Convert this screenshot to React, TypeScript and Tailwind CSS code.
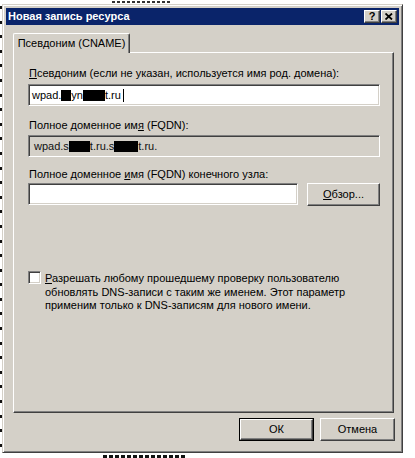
import React from "react";

const sunken =
  "border border-t-[#808080] border-l-[#808080] border-r-white border-b-white shadow-[inset_1px_1px_#404040,inset_-1px_-1px_#d4d0c8]";
const raised =
  "border border-t-white border-l-white border-r-[#404040] border-b-[#404040] shadow-[inset_-1px_-1px_#808080]";

function Blob({ w }: { w: string }) {
  return <span className={`inline-block h-[11px] bg-black align-[-1px] ${w}`} />;
}

export default function App() {
  const marks = Array.from({ length: 32 }, (_, i) => i);
  const topDots = Array.from({ length: 12 }, (_, i) => i);
  const botDots = Array.from({ length: 14 }, (_, i) => i);
  return (
    <div className="relative w-[415px] h-[458px] overflow-hidden bg-white text-[11px] leading-[13px] text-black font-['Liberation_Sans',Arial,sans-serif]">
      {/* background fragments behind the dialog */}
      <div className="absolute left-0 top-[6px] flex flex-col">
        {marks.map((i) => (
          <div key={i} className="h-[14.6px]">
            <div className="w-[3px] h-[3px] bg-[#111]" />
          </div>
        ))}
      </div>
      <div className="absolute left-[112px] top-[1px] flex gap-[2px]">
        {topDots.map((i) => (
          <div key={i} className="w-[3px] h-[2px] bg-[#333]" />
        ))}
      </div>
      <div className="absolute left-[103px] top-[455px] flex gap-[2px]">
        {botDots.map((i) => (
          <div key={i} className="w-[4px] h-[3px] bg-[#111]" />
        ))}
      </div>

      {/* dialog window */}
      <div className="absolute left-[2px] top-[4px] w-[401px] h-[449px] bg-[#d4d0c8] border border-t-[#d4d0c8] border-l-[#d4d0c8] border-r-[#404040] border-b-[#404040] shadow-[inset_1px_1px_#fff,inset_-1px_-1px_#808080] p-[3px] flex flex-col">
        {/* title bar */}
        <div className="h-[17px] bg-[#0a246a] flex items-center pl-[2px] pr-[2px]">
          <span className="text-white font-bold text-[11px] flex-1">Новая запись ресурса</span>
          <div className="flex gap-[1px]">
            <div className={`w-[16px] h-[13px] bg-[#d4d0c8] ${raised} flex items-center justify-center font-bold text-[11px] leading-none`}>
              ?
            </div>
            <div className={`w-[16px] h-[13px] bg-[#d4d0c8] ${raised} flex items-center justify-center`}>
              <svg width="8" height="7" viewBox="0 0 8 7">
                <path d="M0.5 0.5 L7 6.5 M7 0.5 L0.5 6.5" stroke="#000" strokeWidth="1.8" />
              </svg>
            </div>
          </div>
        </div>

        {/* tabs */}
        <div className="mt-[8px] ml-[7px] mr-[5px] flex flex-col">
          <div className="flex">
            <div className="relative z-10 w-[117px] h-[20px] mb-[-1px] bg-[#d4d0c8] border-t border-l border-r border-t-white border-l-white border-r-[#404040] shadow-[inset_-1px_0_#808080] rounded-t-[2px] flex items-center justify-center">
              Псевдоним (CNAME)
            </div>
          </div>
          <div className={`h-[361px] ${raised} pt-[14px] pl-[14px] pr-[13px] flex flex-col`}>
            <div className="pl-[1px]">
              <span className="underline underline-offset-[1px]">П</span>севдоним (если не указан, используется имя род. домена):
            </div>
            <div className={`mt-[4px] h-[22px] bg-white ${sunken} flex items-center pl-[3px] whitespace-nowrap`}>
              wpad.<Blob w="w-[10px]" />yn<Blob w="w-[22px]" />t.ru
              <span className="inline-block w-[1px] h-[13px] bg-black ml-[2px]" />
            </div>

            <div className="mt-[13px] pl-[1px]">
              Полное доменное им<span className="underline underline-offset-[1px]">я</span> (FQDN):
            </div>
            <div className={`mt-[3px] h-[22px] bg-[#d4d0c8] ${sunken} flex items-center pl-[5px] whitespace-nowrap text-[#111]`}>
              wpad.s<Blob w="w-[21px]" />t.ru.s<Blob w="w-[24px]" />t.ru.
            </div>

            <div className="mt-[11px] pl-[1px]">
              Полное доменное <span className="underline underline-offset-[1px]">и</span>мя (FQDN) конечного узла:
            </div>
            <div className="mt-[2px] flex gap-[9px]">
              <div className={`w-[274px] h-[22px] bg-white ${sunken}`} />
              <div className={`w-[74px] h-[23px] ${raised} flex items-center justify-center`}>
                <span>
                  <span className="underline underline-offset-[1px]">О</span>бзор...
                </span>
              </div>
            </div>

            <div className="mt-[65px] flex gap-[4px]">
              <div className={`w-[13px] h-[13px] shrink-0 bg-white ${sunken}`} />
              <div className="pt-[1px] leading-[13.5px]">
                <span className="underline underline-offset-[1px]">Р</span>азрешать любому прошедшему проверку пользователю
                <br />
                обновлять DNS-записи с таким же именем. Этот параметр
                <br />
                применим только к DNS-записям для нового имени.
              </div>
            </div>
          </div>
        </div>

        {/* buttons */}
        <div className="mt-[5px] mr-[4px] flex justify-end gap-[6px]">
          <div className="w-[75px] h-[23px] border border-black">
            <div className={`w-full h-full ${raised} flex items-center justify-center`}>ОК</div>
          </div>
          <div className={`w-[75px] h-[23px] ${raised} flex items-center justify-center`}>Отмена</div>
        </div>
      </div>
    </div>
  );
}
